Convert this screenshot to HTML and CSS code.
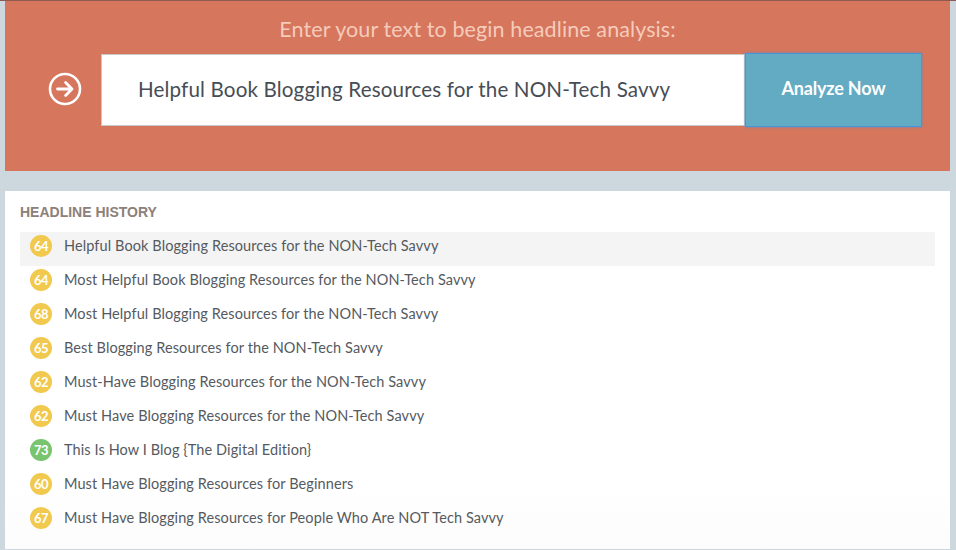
FILE: index.html
```html
<!DOCTYPE html>
<html>
<head>
<meta charset="utf-8">
<link rel="stylesheet" href="styles.css">
</head>
<body>
<div class="page">
  <section class="analyze">
    <h1 class="prompt">Enter your text to begin headline analysis:</h1>
    <div class="form-row">
      <div class="go-icon">
        <svg width="34" height="34" viewBox="0 0 34 34">
          <circle cx="17" cy="17" r="15" fill="none" stroke="#fff" stroke-width="2.6"/>
          <path d="M9.5 17H23.8M17.6 10.6L24 17L17.6 23.4" fill="none" stroke="#fff" stroke-width="2.8" stroke-linecap="round" stroke-linejoin="round"/>
        </svg>
      </div>
      <div class="input">Helpful Book Blogging Resources for the NON-Tech Savvy</div>
      <button class="btn">Analyze Now</button>
    </div>
  </section>
  <section class="history">
    <h2 class="history-title">HEADLINE HISTORY</h2>
    <ul class="list">
      <li class="item active"><span class="badge">64</span><span class="text">Helpful Book Blogging Resources for the NON-Tech Savvy</span></li>
      <li class="item"><span class="badge">64</span><span class="text">Most Helpful Book Blogging Resources for the NON-Tech Savvy</span></li>
      <li class="item"><span class="badge">68</span><span class="text">Most Helpful Blogging Resources for the NON-Tech Savvy</span></li>
      <li class="item"><span class="badge">65</span><span class="text">Best Blogging Resources for the NON-Tech Savvy</span></li>
      <li class="item"><span class="badge">62</span><span class="text">Must-Have Blogging Resources for the NON-Tech Savvy</span></li>
      <li class="item"><span class="badge">62</span><span class="text">Must Have Blogging Resources for the NON-Tech Savvy</span></li>
      <li class="item"><span class="badge green">73</span><span class="text">This Is How I Blog {The Digital Edition}</span></li>
      <li class="item"><span class="badge">60</span><span class="text">Must Have Blogging Resources for Beginners</span></li>
      <li class="item"><span class="badge">67</span><span class="text">Must Have Blogging Resources for People Who Are NOT Tech Savvy</span></li>
    </ul>
  </section>
</div>
</body>
</html>
```

FILE: styles.css
```css
html, body {
  margin: 0;
  padding: 0;
}
body {
  background: #cdd8de;
  font-family: "Lato", "Open Sans", sans-serif;
  width: 956px;
  height: 550px;
  overflow: hidden;
  border-top: 1px solid #8d5a52;
  box-sizing: border-box;
}
.page {
  padding: 0 6px 0 5px;
  display: flex;
  flex-direction: column;
  gap: 20px;
}
.analyze {
  background: #d5765d;
  height: 170px;
  box-sizing: border-box;
  padding-top: 15px;
}
.prompt {
  margin: 0;
  text-align: center;
  font-weight: 400;
  font-size: 21.5px;
  line-height: 26px;
  color: #f6cbbb;
  letter-spacing: 0.1px;
}
.form-row {
  display: flex;
  align-items: center;
  margin-top: 11px;
  height: 74px;
}
.go-icon {
  width: 96px;
  display: flex;
  justify-content: center;
  padding-left: 24px;
  padding-bottom: 2px;
  box-sizing: border-box;
}
.go-icon svg {
  display: block;
}
.input {
  background: #fff;
  border: 1px solid #c9c9c9;
  height: 72px;
  box-sizing: border-box;
  width: 644px;
  display: flex;
  align-items: center;
  padding-left: 36px;
  padding-bottom: 3px;
  font-size: 20.6px;
  color: #474d55;
  letter-spacing: 0.15px;
}
.btn {
  background: #63aac3;
  border: 1px solid #4c93d6;
  box-shadow: 0 0 2px #4c93d6;
  height: 74px;
  width: 177px;
  color: #fff;
  font-family: "Lato", sans-serif;
  font-size: 18px;
  font-weight: 700;
  padding: 0 0 5px 0;
  margin: 0;
  letter-spacing: -0.2px;
}
.history {
  background: linear-gradient(#fff 82%, #fcfcfc);
  height: 358px;
  padding: 13px 15px 0 15px;
  box-sizing: border-box;
}
.history-title {
  margin: 0;
  font-size: 14px;
  font-weight: 700;
  font-family: "Liberation Sans", Arial, sans-serif;
  color: #8c8079;
  line-height: 16px;
}
.list {
  list-style: none;
  margin: 12px 0 0 0;
  padding: 0;
}
.item {
  height: 34px;
  box-sizing: border-box;
  padding-bottom: 6px;
  display: flex;
  align-items: center;
  gap: 12px;
  padding-left: 10px;
}
.item.active {
  background: #f4f4f4;
}
.badge {
  width: 22px;
  height: 22px;
  border-radius: 50%;
  background: #f0c94e;
  color: #fff;
  font-size: 13px;
  font-weight: 700;
  display: flex;
  align-items: center;
  justify-content: center;
  letter-spacing: -0.5px;
  flex: none;
}
.badge.green {
  background: #79c46f;
}
.text {
  font-size: 14.5px;
  color: #555a5f;
  letter-spacing: 0.1px;
  padding-bottom: 1px;
}
```
